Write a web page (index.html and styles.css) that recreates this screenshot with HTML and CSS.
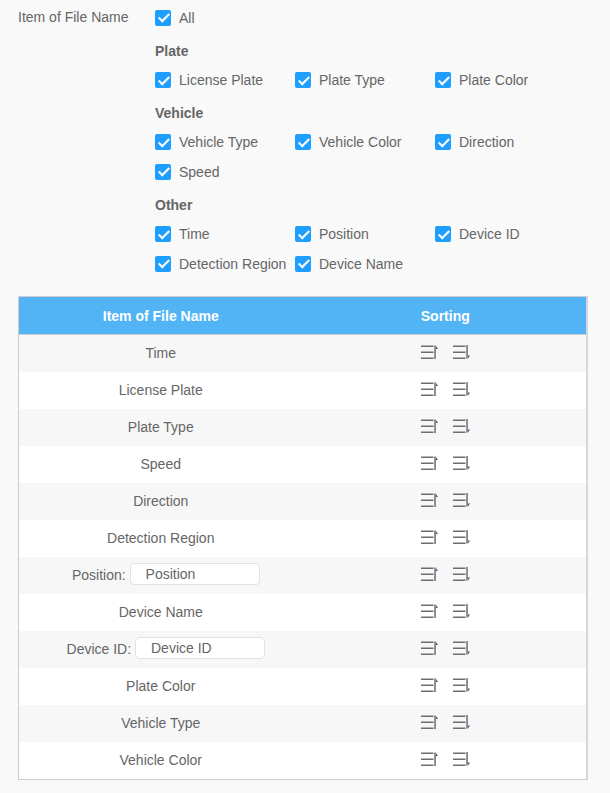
FILE: index.html
```html
<!DOCTYPE html>
<html>
<head>
    <meta charset="UTF-8">
    <title>Item of File Name</title>
    <link rel="stylesheet" href="styles.css">
</head>
<body>
    <svg class="defs" width="0" height="0">
        <symbol id="sort-up" viewBox="0 0 18 15">
            <path d="M0 1.2h12.5M0 7.2h12.5M0 13.2h12.5" stroke="#6e6e6e" stroke-width="1.5" fill="none"/>
            <path d="M13.5 0.5v13.5" stroke="#c08a5e" fill="none"/>
            <path d="M14.5 0.5v13.5" stroke="#5f93cf" fill="none"/>
            <path d="M15 1l2 3h-2z" fill="#4a5f80"/>
        </symbol>
        <symbol id="sort-down" viewBox="0 0 18 15">
            <path d="M0 1.2h12.5M0 7.2h12.5M0 13.2h12.5" stroke="#6e6e6e" stroke-width="1.5" fill="none"/>
            <path d="M13.5 0v13.5" stroke="#c08a5e" fill="none"/>
            <path d="M14.5 0v13.5" stroke="#5f93cf" fill="none"/>
            <path d="M15 13.5l2-3h-2z" fill="#4a5f80"/>
        </symbol>
    </svg>

    <div class="form-row">
        <div class="form-label">Item of File Name</div>
        <div class="form-body">
            <label class="check all"><span class="box"></span>All</label>

            <h4>Plate</h4>
            <div class="check-grid">
                <label class="check"><span class="box"></span>License Plate</label>
                <label class="check"><span class="box"></span>Plate Type</label>
                <label class="check"><span class="box"></span>Plate Color</label>
            </div>

            <h4>Vehicle</h4>
            <div class="check-grid">
                <label class="check"><span class="box"></span>Vehicle Type</label>
                <label class="check"><span class="box"></span>Vehicle Color</label>
                <label class="check"><span class="box"></span>Direction</label>
                <label class="check"><span class="box"></span>Speed</label>
            </div>

            <h4>Other</h4>
            <div class="check-grid">
                <label class="check"><span class="box"></span>Time</label>
                <label class="check"><span class="box"></span>Position</label>
                <label class="check"><span class="box"></span>Device ID</label>
                <label class="check"><span class="box"></span>Detection Region</label>
                <label class="check"><span class="box"></span>Device Name</label>
            </div>
        </div>
    </div>

    <table class="sort-table">
        <thead>
            <tr><th>Item of File Name</th><th class="sort-head">Sorting</th></tr>
        </thead>
        <tbody>
            <tr><td>Time</td><td class="sort-cell"><svg class="icon"><use href="#sort-up"/></svg><svg class="icon"><use href="#sort-down"/></svg></td></tr>
            <tr><td>License Plate</td><td class="sort-cell"><svg class="icon"><use href="#sort-up"/></svg><svg class="icon"><use href="#sort-down"/></svg></td></tr>
            <tr><td>Plate Type</td><td class="sort-cell"><svg class="icon"><use href="#sort-up"/></svg><svg class="icon"><use href="#sort-down"/></svg></td></tr>
            <tr><td>Speed</td><td class="sort-cell"><svg class="icon"><use href="#sort-up"/></svg><svg class="icon"><use href="#sort-down"/></svg></td></tr>
            <tr><td>Direction</td><td class="sort-cell"><svg class="icon"><use href="#sort-up"/></svg><svg class="icon"><use href="#sort-down"/></svg></td></tr>
            <tr><td>Detection Region</td><td class="sort-cell"><svg class="icon"><use href="#sort-up"/></svg><svg class="icon"><use href="#sort-down"/></svg></td></tr>
            <tr><td class="input-cell">Position: <input class="name-input" type="text" value="Position"></td><td class="sort-cell"><svg class="icon"><use href="#sort-up"/></svg><svg class="icon"><use href="#sort-down"/></svg></td></tr>
            <tr><td>Device Name</td><td class="sort-cell"><svg class="icon"><use href="#sort-up"/></svg><svg class="icon"><use href="#sort-down"/></svg></td></tr>
            <tr><td class="input-cell">Device ID: <input class="name-input" type="text" value="Device ID"></td><td class="sort-cell"><svg class="icon"><use href="#sort-up"/></svg><svg class="icon"><use href="#sort-down"/></svg></td></tr>
            <tr><td>Plate Color</td><td class="sort-cell"><svg class="icon"><use href="#sort-up"/></svg><svg class="icon"><use href="#sort-down"/></svg></td></tr>
            <tr><td>Vehicle Type</td><td class="sort-cell"><svg class="icon"><use href="#sort-up"/></svg><svg class="icon"><use href="#sort-down"/></svg></td></tr>
            <tr><td>Vehicle Color</td><td class="sort-cell"><svg class="icon"><use href="#sort-up"/></svg><svg class="icon"><use href="#sort-down"/></svg></td></tr>
        </tbody>
    </table>
</body>
</html>
```

FILE: styles.css
```css
body {
    margin: 0;
    padding: 0 22px 13px 18px;
    background: #f9f9f9;
    font-family: "Liberation Sans", Arial, sans-serif;
    font-size: 14px;
    color: #666;
}
.defs {
    position: absolute;
}
.form-row {
    display: flex;
    height: 296px;
}
.form-label {
    width: 137px;
    padding-top: 9px;
    line-height: 16px;
}
.form-body {
    flex: 1;
    padding-top: 3px;
}
h4 {
    margin: 0;
    font-size: 14px;
    line-height: 16px;
    color: #666;
}
.all + h4 {
    margin-top: 11px;
}
.check-grid + h4 {
    margin-top: 10px;
}
.check-grid {
    display: grid;
    grid-template-columns: repeat(3, 140px);
    margin-top: 7px;
}
.all + h4 + .check-grid {
    margin-top: 6px;
}
.check {
    display: flex;
    align-items: center;
    height: 29.4px;
    white-space: nowrap;
}
.box {
    position: relative;
    width: 16px;
    height: 16px;
    margin-right: 8px;
    flex: none;
    border-radius: 2px;
    background: #1e9fff;
}
.box::after {
    content: "";
    position: absolute;
    left: 5.5px;
    top: 1.5px;
    width: 4px;
    height: 9px;
    border: solid #fff;
    border-width: 0 2px 2px 0;
    transform: rotate(45deg);
}
.sort-table {
    width: 570px;
    border: 1px solid #ccc;
    border-right: 2px solid #d6d6de;
    border-collapse: separate;
    border-spacing: 0;
    table-layout: fixed;
    background: #fff;
}
.sort-table th {
    height: 37px;
    padding: 0;
    background: #52b4f5;
    color: #fff;
    font-size: 14px;
    font-weight: bold;
    border-bottom: 1px solid #ccc;
}
.sort-table th.sort-head {
    padding-left: 2px;
}
.sort-table td {
    height: 35px;
    padding: 0 0 2px;
    text-align: center;
}
.sort-table td.input-cell {
    height: 33px;
    padding: 0 0 4px 10px;
}
.sort-table tbody tr:nth-child(odd) {
    background: #f7f7f7;
}
.sort-table td.sort-cell {
    height: 37px;
    padding: 0 0 0 4px;
    white-space: nowrap;
}
.icon {
    width: 18px;
    height: 15px;
    margin: 0 7px;
    vertical-align: 0;
}
.name-input {
    box-sizing: border-box;
    width: 130px;
    height: 22px;
    padding: 0 15px;
    border: 1px solid #e0e0e6;
    border-radius: 4px;
    background: #fff;
    font-family: inherit;
    font-size: 14px;
    color: #666;
    vertical-align: 1px;
}
```
